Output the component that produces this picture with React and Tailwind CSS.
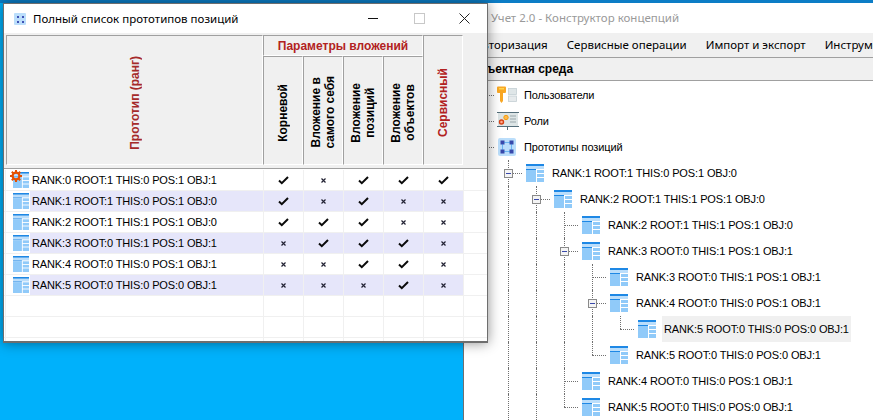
import React from "react";

const ui = { fontFamily: '"Noto Sans", "Open Sans", sans-serif' };
const ar = { fontFamily: '"Liberation Sans", Arial, sans-serif' };

function TableIcon({ size = 18 }) {
  return (
    <svg width={size} height={size} viewBox="0 0 18 18" className="shrink-0">
      <rect x="0" y="0" width="18" height="2" fill="#1e88e5" />
      <rect x="0" y="2" width="18" height="3" fill="#bbdefb" />
      <rect x="0" y="5" width="10" height="1" fill="#1e88e5" />
      <rect x="0" y="6" width="10" height="12" fill="#90caf9" />
      <rect x="11" y="6" width="7" height="3" fill="#90caf9" />
      <rect x="11" y="10" width="7" height="3" fill="#90caf9" />
      <rect x="11" y="14" width="7" height="4" fill="#90caf9" />
    </svg>
  );
}

function Gear() {
  return (
    <svg width="12" height="12" viewBox="0 0 12 12">
      <circle cx="6" cy="6" r="3.4" fill="none" stroke="#e65100" strokeWidth="2.2" />
      <g stroke="#e65100" strokeWidth="2">
        <path d="M6 0v2.5M6 9.5V12M0 6h2.5M9.5 6H12M1.8 1.8l1.8 1.8M8.4 8.4l1.8 1.8M1.8 10.2l1.8-1.8M8.4 3.6l1.8-1.8" />
      </g>
    </svg>
  );
}

function KeyIcon() {
  return (
    <svg width="22" height="18" viewBox="0 0 22 18" className="shrink-0">
      <path d="M1 1.5Q1 0.5 2 0.5H9Q10 0.5 10 1.5V6Q10 7 9 7H7V15L5.5 17L4 15V7H2Q1 7 1 6Z" fill="#f9a825" />
      <rect x="3" y="2" width="5" height="1.5" fill="#ffd54f" />
      <rect x="12.5" y="2.5" width="8" height="6" fill="#dfe6e8" stroke="#c4cfd4" strokeWidth="0.8" />
      <rect x="12.5" y="10" width="8" height="5.5" fill="#e6eaec" stroke="#c4cfd4" strokeWidth="0.8" />
    </svg>
  );
}

function RoleIcon() {
  return (
    <svg width="22" height="19" viewBox="0 0 22 19" className="shrink-0">
      <rect x="1" y="1" width="20" height="14" fill="#dde5e6" />
      <rect x="0" y="0" width="22" height="1" fill="#546e7a" />
      <rect x="0" y="14" width="22" height="1" fill="#546e7a" />
      <rect x="10" y="15" width="1" height="3" fill="#546e7a" />
      <circle cx="9" cy="5.5" r="2.2" fill="#ffb74d" stroke="#f59e0b" />
      <circle cx="4.5" cy="10" r="2" fill="#ffab91" stroke="#d84315" strokeWidth="1.4" />
      <path d="M13 4h6M13 7h6M13 10h6" stroke="#9aa7ab" strokeWidth="1" />
    </svg>
  );
}

function ProtoIcon() {
  return (
    <svg width="18" height="18" viewBox="0 0 18 18" className="shrink-0">
      <rect x="0" y="0" width="18" height="18" rx="2" fill="#bbdefb" />
      <rect x="2.5" y="2.5" width="4" height="4" fill="#3949ab" />
      <rect x="11.5" y="2.5" width="4" height="4" fill="#3949ab" />
      <rect x="2.5" y="11.5" width="4" height="4" fill="#3949ab" />
      <rect x="11.5" y="11.5" width="4" height="4" fill="#3949ab" />
      <path d="M6.5 4.5h5M6.5 13.5h5M4.5 6.5v5M13.5 6.5v5" stroke="#1e88e5" strokeWidth="1" strokeDasharray="1 1" />
    </svg>
  );
}

function TitleIcon() {
  return (
    <svg width="12" height="12" viewBox="0 0 12 12" className="shrink-0">
      <rect width="12" height="12" rx="1" fill="#bbdefb" />
      <rect x="3" y="3" width="2" height="2" fill="#3f51b5" />
      <rect x="8" y="3" width="2" height="2" fill="#3f51b5" />
      <rect x="3" y="8" width="2" height="2" fill="#3f51b5" />
      <rect x="8" y="8" width="2" height="2" fill="#3f51b5" />
    </svg>
  );
}

function Check() {
  return (
    <svg width="11" height="9" viewBox="0 0 11 9">
      <path d="M1 4.5L3.8 7.2L10 1" fill="none" stroke="#0a0a0a" strokeWidth="2" />
    </svg>
  );
}

function Cross() {
  return (
    <svg width="5" height="5" viewBox="0 0 5 5">
      <path d="M0.5 0.5L4.5 4.5M4.5 0.5L0.5 4.5" fill="none" stroke="#222233" strokeWidth="1.2" />
    </svg>
  );
}

function WinButtons() {
  return (
    <div className="ml-auto flex items-center">
      <svg width="11" height="11" viewBox="0 0 11 11" className="mr-[35px]">
        <path d="M0 5.5H10" stroke="#111" strokeWidth="1" />
      </svg>
      <svg width="11" height="11" viewBox="0 0 11 11" className="mr-[34px]">
        <rect x="0.5" y="0.5" width="10" height="10" fill="none" stroke="#c8c8c8" />
      </svg>
      <svg width="11" height="11" viewBox="0 0 11 11" className="mr-[17px]">
        <path d="M0.5 0.5L10.5 10.5M10.5 0.5L0.5 10.5" stroke="#222" strokeWidth="1" />
      </svg>
    </div>
  );
}

const cellCls = "border-t border-l border-b border-r border-t-[#a0a0a0] border-l-[#a0a0a0] border-b-white border-r-white bg-[#f0f0f0]";
const vText = "[writing-mode:vertical-rl] rotate-180 text-center font-bold text-[12px] leading-[14px] whitespace-pre-line";
const rowText = "text-[11px] tracking-[-0.12px] text-black";

const rows = [
  ["RANK:0 ROOT:1 THIS:0 POS:1 OBJ:1", [1, 0, 1, 1, 1]],
  ["RANK:1 ROOT:1 THIS:0 POS:1 OBJ:0", [1, 0, 1, 0, 0]],
  ["RANK:2 ROOT:1 THIS:1 POS:1 OBJ:0", [1, 1, 1, 0, 0]],
  ["RANK:3 ROOT:0 THIS:1 POS:1 OBJ:1", [0, 1, 1, 1, 0]],
  ["RANK:4 ROOT:0 THIS:0 POS:1 OBJ:1", [0, 0, 1, 1, 0]],
  ["RANK:5 ROOT:0 THIS:0 POS:0 OBJ:1", [0, 0, 0, 1, 0]],
];

function GridRow({ i, row }) {
  const shaded = i % 2 === 1;
  const bg = shaded ? "bg-[#e6e6fa]" : "bg-white";
  return (
    <div className="flex h-[21px] shrink-0 border-b border-[#f0f0f0]">
      <div className="relative ml-px flex w-[25px] shrink-0 items-center border-l border-[#f0f0f0] pl-[7px]">
        {row && <TableIcon size={16} />}
        {row && i === 0 && (
          <span className="absolute left-[4px] top-0 flex">
            <Gear />
          </span>
        )}
      </div>
      <div className={`flex w-[233px] shrink-0 items-center pl-[2px] pt-px ${rowText} ${row ? bg : ""}`}>
        {row ? row[0] : ""}
      </div>
      {[0, 1, 2, 3, 4].map((k) => (
        <div key={k} className={`flex w-[40px] shrink-0 items-center justify-center border-l border-[#f0f0f0] ${row ? bg : ""}`}>
          {row ? row[1][k] ? <Check /> : <Cross /> : null}
        </div>
      ))}
      <div className="flex-1 border-l border-[#f0f0f0]" />
    </div>
  );
}

const tree = [
  { text: "Пользователи", icon: "key", guides: [], at: 0, kind: "tee" },
  { text: "Роли", icon: "role", guides: [], at: 0, kind: "tee" },
  { text: "Прототипы позиций", icon: "proto", guides: [], at: 0, kind: "tee" },
  { text: "RANK:1 ROOT:1 THIS:0 POS:1 OBJ:0", guides: [], at: 1, kind: "tee", box: true },
  { text: "RANK:2 ROOT:1 THIS:1 POS:1 OBJ:0", guides: [1], at: 2, kind: "tee", box: true },
  { text: "RANK:2 ROOT:1 THIS:1 POS:1 OBJ:0", guides: [1, 2], at: 3, kind: "tee" },
  { text: "RANK:3 ROOT:0 THIS:1 POS:1 OBJ:1", guides: [1, 2], at: 3, kind: "tee", box: true },
  { text: "RANK:3 ROOT:0 THIS:1 POS:1 OBJ:1", guides: [1, 2, 3], at: 4, kind: "tee" },
  { text: "RANK:4 ROOT:0 THIS:0 POS:1 OBJ:1", guides: [1, 2, 3], at: 4, kind: "tee", box: true },
  { text: "RANK:5 ROOT:0 THIS:0 POS:0 OBJ:1", guides: [1, 2, 3, 4], at: 5, kind: "last", sel: true },
  { text: "RANK:5 ROOT:0 THIS:0 POS:0 OBJ:1", guides: [1, 2, 3], at: 4, kind: "last" },
  { text: "RANK:4 ROOT:0 THIS:0 POS:1 OBJ:1", guides: [1, 2], at: 3, kind: "tee" },
  { text: "RANK:5 ROOT:0 THIS:0 POS:0 OBJ:1", guides: [1, 2], at: 3, kind: "last" },
];

function TreeCell({ guide, conn, kind, box }) {
  return (
    <div className="relative h-full w-[28px] shrink-0">
      {(guide || (conn && kind === "tee")) && (
        <div className="absolute bottom-0 left-[14px] top-0 border-l border-dotted border-[#707070]" />
      )}
      {conn && kind === "last" && (
        <div className="absolute left-[14px] top-0 h-[13px] border-l border-dotted border-[#707070]" />
      )}
      {conn && (
        <div className="absolute left-[14px] top-[13px] w-[14px] border-t border-dotted border-[#707070]" />
      )}
      {box && (
        <div className="absolute left-[10px] top-[9px] flex h-[9px] w-[9px] items-center justify-center border border-[#8a8a8a] bg-[#f4f4f4]">
          <div className="h-px w-[5px] bg-[#3949ab]" />
        </div>
      )}
    </div>
  );
}

function TreeRow({ r }) {
  const cols = [];
  for (let c = 0; c <= r.at; c++) {
    cols.push(
      <TreeCell key={c} guide={r.guides.includes(c)} conn={c === r.at} kind={r.kind} box={c === r.at && r.box} />
    );
  }
  return (
    <div className="flex h-[26px] shrink-0 items-center whitespace-nowrap">
      {cols}
      <div className={`flex w-[28px] shrink-0 items-center ${r.icon === "key" ? "pl-[2px]" : r.icon === "role" ? "pl-[3px]" : "pl-[4px]"}`}>
        {r.icon === "key" ? <KeyIcon /> : r.icon === "role" ? <RoleIcon /> : r.icon === "proto" ? <ProtoIcon /> : <TableIcon />}
      </div>
      <span className={`flex h-[26px] items-center px-[2px] ${rowText} ${r.sel ? "bg-[#f0f0f0]" : ""}`}>{r.text}</span>
    </div>
  );
}

export default function App() {
  return (
    <div className="relative h-[420px] w-[873px] overflow-hidden bg-[#00b1fb]" style={ar}>
      <div className="h-[3px] bg-[#0c7dc6]" />

      {/* back window */}
      <div className="absolute left-[463px] top-[3px] flex h-[417px] w-[410px] flex-col overflow-hidden border-l border-[#707070] bg-white">
        <div className="flex h-[30px] shrink-0 items-center pl-[27px] text-[11.5px] text-[#9a9a9a]" style={ui}>
          Учет 2.0 - Конструктор концепций
        </div>
        <div className="flex h-[25px] shrink-0 items-center whitespace-nowrap border-b border-[#a0a0a0] bg-[#f0f0f0] pl-[11px] text-[11.5px] text-black" style={ui}>
          <span>Авторизация</span>
          <span className="ml-[19px]">Сервисные операции</span>
          <span className="ml-[19px]">Импорт и экспорт</span>
          <span className="ml-[19px]">Инструменты</span>
        </div>
        <div className="flex h-[23px] shrink-0 items-center border-b border-[#a0a0a0] bg-[#f0f0f0] pl-[6px] text-[12px] font-bold text-black">
          Объектная среда
        </div>
        <div className="flex min-h-0 flex-1 flex-col pl-[2px] pt-px">
          {tree.map((r, i) => (
            <TreeRow key={i} r={r} />
          ))}
          <div className="flex min-h-0 flex-1">
            <TreeCell />
            <TreeCell guide />
            <TreeCell guide />
          </div>
        </div>
      </div>

      {/* front window */}
      <div className="absolute left-[3px] top-[3px] flex h-[340px] w-[485px] flex-col overflow-hidden border border-b-2 border-[#6e6e6e] bg-white shadow-[0_0_12px_rgba(0,0,0,0.45)]">
        <div className="flex h-[29px] shrink-0 items-center pl-[10px] text-[11.5px] text-black" style={ui}>
          <TitleIcon />
          <span className="ml-[7px]">Полный список прототипов позиций</span>
          <WinButtons />
        </div>
        <div className="flex h-[135px] shrink-0 bg-[#f0f0f0] pl-[2px] pt-[2px]">
          <div className={`flex h-[130px] w-[257px] items-center justify-center pt-[5px] ${cellCls}`}>
            <span className={`${vText} text-[#a52a2a]`}>Прототип (ранг)</span>
          </div>
          <div className="flex w-[160px] flex-col">
            <div className={`flex h-[21px] items-center justify-center text-[12px] font-bold text-[#b22222] ${cellCls}`}>
              Параметры вложений
            </div>
            <div className="flex h-[109px]">
              {["Корневой", "Вложение в\nсамого себя", "Вложение\nпозиций", "Вложение\nобъектов"].map((t) => (
                <div key={t} className={`flex w-[40px] items-center justify-center pt-[4px] text-black ${cellCls}`}>
                  <span className={vText}>{t}</span>
                </div>
              ))}
            </div>
          </div>
          <div className={`flex h-[130px] w-[40px] items-center justify-center pt-[5px] ${cellCls}`}>
            <span className={`${vText} text-[#b22222]`}>Сервисный</span>
          </div>
        </div>
        <div className="flex min-h-0 flex-1 flex-col overflow-hidden border-t border-[#a0a0a0] bg-white pt-px">
          {rows.map((row, i) => (
            <GridRow key={i} i={i} row={row} />
          ))}
          <GridRow i={6} />
          <GridRow i={7} />
          <GridRow i={8} />
        </div>
      </div>
    </div>
  );
}
